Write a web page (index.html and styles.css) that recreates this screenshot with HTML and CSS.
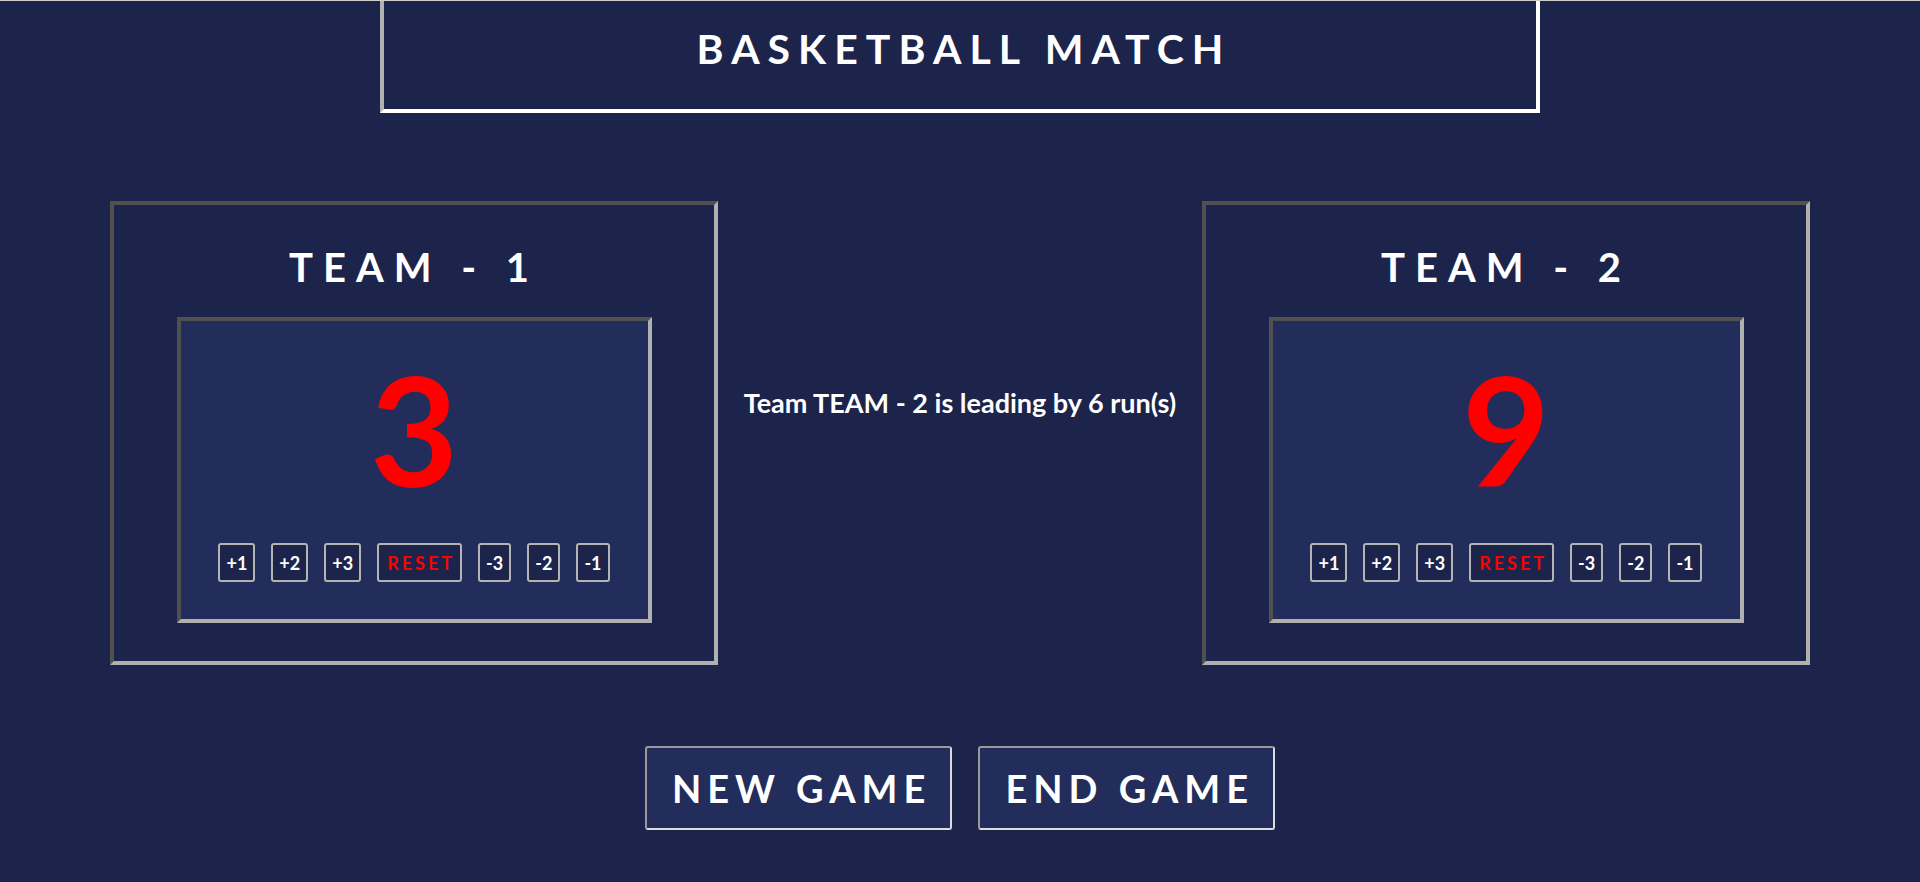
FILE: index.html
```html
<!DOCTYPE html>
<html lang="en">
<head>
<meta charset="utf-8">
<title>Basketball Match</title>
<link rel="stylesheet" href="styles.css">
</head>
<body>
<div class="page">
  <header class="title-box">
    <h1 class="title">BASKETBALL MATCH</h1>
  </header>

  <main class="board">
    <section class="team">
      <h2 class="team-name">TEAM - 1</h2>
      <div class="score-box">
        <div class="score">3</div>
        <div class="controls">
          <button class="btn">+1</button>
          <button class="btn">+2</button>
          <button class="btn">+3</button>
          <button class="btn btn-reset">RESET</button>
          <button class="btn">-3</button>
          <button class="btn">-2</button>
          <button class="btn">-1</button>
        </div>
      </div>
    </section>

    <div class="status">
      <p class="status-text">Team TEAM - 2 is leading by 6 run(s)</p>
    </div>

    <section class="team">
      <h2 class="team-name">TEAM - 2</h2>
      <div class="score-box">
        <div class="score">9</div>
        <div class="controls">
          <button class="btn">+1</button>
          <button class="btn">+2</button>
          <button class="btn">+3</button>
          <button class="btn btn-reset">RESET</button>
          <button class="btn">-3</button>
          <button class="btn">-2</button>
          <button class="btn">-1</button>
        </div>
      </div>
    </section>
  </main>

  <div class="actions">
    <button class="big-btn">NEW GAME</button>
    <button class="big-btn">END GAME</button>
  </div>
</div>
</body>
</html>
```

FILE: styles.css
```css
* {
  box-sizing: border-box;
}

html, body {
  margin: 0;
  padding: 0;
}

body {
  background: #1c244b;
  color: #ffffff;
  font-family: "Lato", "Open Sans", sans-serif;
  height: 882px;
  overflow: hidden;
}

.page {
  border-top: 1px solid #cfcfcf;
}

.title-box {
  width: 1160px;
  height: 112px;
  margin: 0 auto;
  border-style: solid;
  border-width: 0 4px 4px 4px;
  border-color: #b0b0b0 #ffffff #ffffff #b0b0b0;
}

.title {
  margin: 0;
  font-size: 41px;
  font-weight: 700;
  letter-spacing: 8px;
  line-height: 96px;
  text-align: center;
  padding-left: 8px;
}

.board {
  display: flex;
  align-items: flex-start;
  padding: 0 110px;
  margin-top: 88px;
}

.team {
  width: 608px;
  height: 464px;
  padding: 38px 0;
  border: 4px solid;
  border-color: #505050 #b0b0b0 #b0b0b0 #505050;
}

.team-name {
  margin: 0 0 26px;
  font-size: 40px;
  font-weight: 700;
  line-height: 48px;
  letter-spacing: 10px;
  text-align: center;
}

.score-box {
  width: 475px;
  height: 306px;
  margin: 0 auto;
  padding-top: 32px;
  background: #232d5b;
  border: 4px solid;
  border-color: #505050 #b0b0b0 #b0b0b0 #505050;
}

.score {
  font-size: 152px;
  line-height: 150px;
  font-weight: 700;
  color: #ff0000;
  text-align: center;
}

.controls {
  display: flex;
  justify-content: center;
  gap: 16px;
  margin-top: 40px;
}

.btn {
  height: 39px;
  padding: 0 6px;
  background: #1c244b;
  color: #ffffff;
  border: 2px solid #b4b4b4;
  border-radius: 3px;
  font-family: "Lato", "Open Sans", sans-serif;
  font-size: 18px;
  font-weight: 700;
}

.btn-reset {
  color: #ff0000;
  letter-spacing: 3px;
  padding: 0 5px 0 8px;
}

.status {
  flex: 1;
  padding-top: 186px;
  text-align: center;
}

.status-text {
  margin: 0;
  font-size: 27px;
  font-weight: 700;
  line-height: 32px;
}

.actions {
  display: flex;
  justify-content: center;
  gap: 26px;
  margin-top: 81px;
}

.big-btn {
  height: 84px;
  padding: 0 19px 0 25px;
  background: #232d5b;
  color: #ffffff;
  border: 2px solid;
  border-color: #9a9a9a #dcdcdc #dcdcdc #9a9a9a;
  border-radius: 3px;
  font-family: "Lato", "Open Sans", sans-serif;
  font-size: 38px;
  font-weight: 700;
  letter-spacing: 6px;
}
```
